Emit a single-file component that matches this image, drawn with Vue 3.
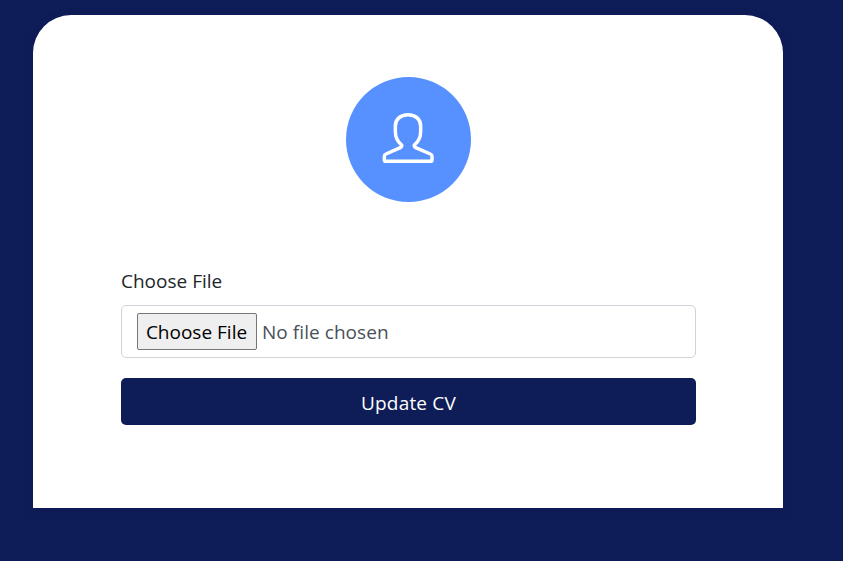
<script setup>
import { ref } from 'vue'

const fileName = ref('No file chosen')
</script>

<template>
  <main class="page">
    <section class="card">
      <div class="avatar">
        <svg class="avatar-icon" viewBox="0 0 216 216" fill="none" stroke="#fff" stroke-width="10.500" stroke-linejoin="round" stroke-linecap="round">
          <path d="M108 38C85 38 70 52 70 72V88C70 106 77 119 87 127Q93 132 85 137L42 156Q37 158 37 163V174Q37 178 41 178H176Q180 178 180 174V163Q180 158 175 156L131 137Q123 132 129 127C139 119 146 106 146 88V72C146 52 131 38 108 38Z" />
        </svg>
      </div>
      <form class="form" @submit.prevent>
        <label class="label">Choose File</label>
        <div class="file">
          <button type="button" class="pick">Choose File</button>
          <span class="name">{{ fileName }}</span>
        </div>
        <button type="submit" class="submit">Update CV</button>
      </form>
    </section>
  </main>
</template>

<style>
body {
  background: #0e1d57;
}
</style>

<style scoped>
.page {
  box-sizing: border-box;
  height: 561px;
  padding: 15px 60px 53px 33px;
  background: #0e1d57;
  font-family: "Open Sans", "Noto Sans", sans-serif;
  font-size: 19px;
  line-height: 30px;
}
.card {
  box-sizing: border-box;
  height: 493px;
  padding: 62px 87px 0 88px;
  background: #fff;
  border-radius: 38px 38px 0 0;
  box-shadow: 0 2px 10px rgba(16, 16, 80, 0.4);
}
.avatar {
  box-sizing: border-box;
  width: 125px;
  height: 125px;
  margin: 0 auto;
  padding: 25px 0 0 26px;
  border-radius: 50%;
  background: #5790ff;
}
.avatar-icon {
  display: block;
  width: 72px;
  height: 72px;
}
.form {
  display: flex;
  flex-direction: column;
  margin-top: 64px;
}
.label {
  height: 30px;
  margin-bottom: 9px;
  color: #212529;
}
.file {
  box-sizing: border-box;
  display: flex;
  align-items: center;
  height: 53px;
  padding: 0 15px;
  border: 1px solid #ced4da;
  border-radius: 5px;
  color: #495057;
}
.pick {
  box-sizing: border-box;
  width: 120px;
  height: 37px;
  margin-right: 5px;
  padding: 0 1px 0 0;
  border: 1px solid #767676;
  border-radius: 2px;
  background: #efefef;
  color: #000;
  font: inherit;
  white-space: nowrap;
}
.name {
  letter-spacing: 0.06px;
  white-space: nowrap;
}
.submit {
  height: 47px;
  margin-top: 20px;
  padding: 2px 0 0;
  border: 0;
  border-radius: 5px;
  background: #0e1d57;
  color: #fff;
  font: inherit;
  letter-spacing: 0.18px;
}
</style>
